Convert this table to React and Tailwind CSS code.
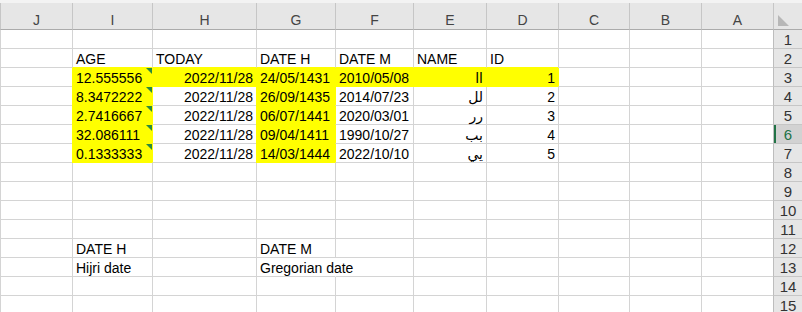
import React from 'react';

// sheet is right-to-left: column A sits next to the row numbers on the right
const COLS = ['A', 'B', 'C', 'D', 'E', 'F', 'G', 'H', 'I', 'J'];
const NEXT = { A: 'B', B: 'C', C: 'D', D: 'E', E: 'F', F: 'G', G: 'H', H: 'I', I: 'J', J: null };

const Y = true;

const cells = {
  2: {
    I: { v: 'AGE' }, H: { v: 'TODAY' }, G: { v: 'DATE H' },
    F: { v: 'DATE M' }, E: { v: 'NAME' }, D: { v: 'ID' },
  },
  3: {
    I: { v: '12.555556', fill: Y, warn: Y }, H: { v: '2022/11/28', r: Y, fill: Y },
    G: { v: '24/05/1431', fill: Y }, F: { v: '2010/05/08', fill: Y },
    E: { v: 'اا', r: Y, fill: Y }, D: { v: '1', r: Y, fill: Y },
  },
  4: {
    I: { v: '8.3472222', fill: Y, warn: Y }, H: { v: '2022/11/28', r: Y },
    G: { v: '26/09/1435', fill: Y }, F: { v: '2014/07/23' },
    E: { v: 'لل', r: Y }, D: { v: '2', r: Y },
  },
  5: {
    I: { v: '2.7416667', fill: Y, warn: Y }, H: { v: '2022/11/28', r: Y },
    G: { v: '06/07/1441', fill: Y }, F: { v: '2020/03/01' },
    E: { v: 'رر', r: Y }, D: { v: '3', r: Y },
  },
  6: {
    I: { v: '32.086111', fill: Y, warn: Y }, H: { v: '2022/11/28', r: Y },
    G: { v: '09/04/1411', fill: Y }, F: { v: '1990/10/27' },
    E: { v: 'بب', r: Y }, D: { v: '4', r: Y },
  },
  7: {
    I: { v: '0.1333333', fill: Y, warn: Y }, H: { v: '2022/11/28', r: Y },
    G: { v: '14/03/1444', fill: Y }, F: { v: '2022/10/10' },
    E: { v: 'يي', r: Y }, D: { v: '5', r: Y },
  },
  12: { I: { v: 'DATE H' }, G: { v: 'DATE M' } },
  13: { I: { v: 'Hijri date' }, G: { v: 'Gregorian date' }, F: { hideLeft: Y } },
};

const ROWS = Array.from({ length: 15 }, (_, i) => i + 1);
const ACTIVE_ROW = 6;

const get = (r, c) => (c && cells[r] && cells[r][c]) || {};

function Cell({ r, c }) {
  const cell = get(r, c);
  const fill = !!cell.fill;
  const leftYellow = fill || !!get(r, NEXT[c]).fill;
  const bottomYellow = fill || !!get(r + 1, c).fill;

  const leftCls = cell.hideLeft
    ? 'border-l-white'
    : leftYellow
    ? 'border-l-[#ffff00]'
    : 'border-l-[#d4d4d4]';
  const bottomCls = bottomYellow ? 'border-b-[#ffff00]' : 'border-b-[#d4d4d4]';

  return (
    <div
      className={`relative h-[19px] border-l border-b ${leftCls} ${bottomCls} ${
        fill ? 'bg-[#ffff00]' : 'bg-white'
      }`}
    >
      {cell.v && (
        <div
          dir="ltr"
          className={`whitespace-nowrap px-[3px] pt-[3px] leading-[15px] text-[14px] text-black ${
            cell.r ? 'text-right' : 'text-left'
          }`}
        >
          {cell.v}
        </div>
      )}
      {cell.warn && (
        <span className="absolute top-0 right-0 h-0 w-0 border-t-[6px] border-l-[6px] border-t-[#2a8a3e] border-l-transparent" />
      )}
    </div>
  );
}

function RowHeader({ n }) {
  const active = n === ACTIVE_ROW;
  return (
    <div
      className={`relative h-[19px] border-b border-l border-b-[#c6c6c6] border-l-[#bdbdbd] pt-[2px] text-center text-[15px] leading-[16px] ${
        active ? 'bg-[#d2d2d2] text-[#217346]' : 'bg-[#e6e6e6] text-[#333]'
      }`}
    >
      {n}
      {active && <span className="absolute left-0 top-0 h-full w-[2px] bg-[#217346]" />}
    </div>
  );
}

export default function App() {
  return (
    <div
      dir="rtl"
      className="h-[312px] w-[802px] overflow-hidden bg-white"
      style={{ fontFamily: '"Liberation Sans", Arial, "DejaVu Sans", sans-serif' }}
    >
      <div className="h-[3px] bg-[#f3f3f3]" />
      <div className="grid grid-cols-[29px_72px_72px_71px_72px_73px_78px_79px_104px_80px_1fr]">
        {/* column headers */}
        <div className="relative h-[27px] border-b border-l border-b-[#ababab] border-l-[#c6c6c6] bg-[#e6e6e6]">
          <svg className="absolute left-[4px] top-[12px]" width="11" height="11" viewBox="0 0 11 11">
            <polygon points="0,0 0,11 11,11" fill="#b7b7b7" />
          </svg>
        </div>
        {COLS.map((c) => (
          <div
            key={c}
            className="flex h-[27px] items-end justify-center border-b border-l border-b-[#ababab] border-l-[#c6c6c6] bg-[#e6e6e6] pb-[2px] text-[14px] leading-[14px] text-[#444]"
          >
            {c}
          </div>
        ))}

        {ROWS.map((r) => (
          <React.Fragment key={r}>
            <RowHeader n={r} />
            {COLS.map((c) => (
              <Cell key={c} r={r} c={c} />
            ))}
          </React.Fragment>
        ))}
      </div>
    </div>
  );
}
